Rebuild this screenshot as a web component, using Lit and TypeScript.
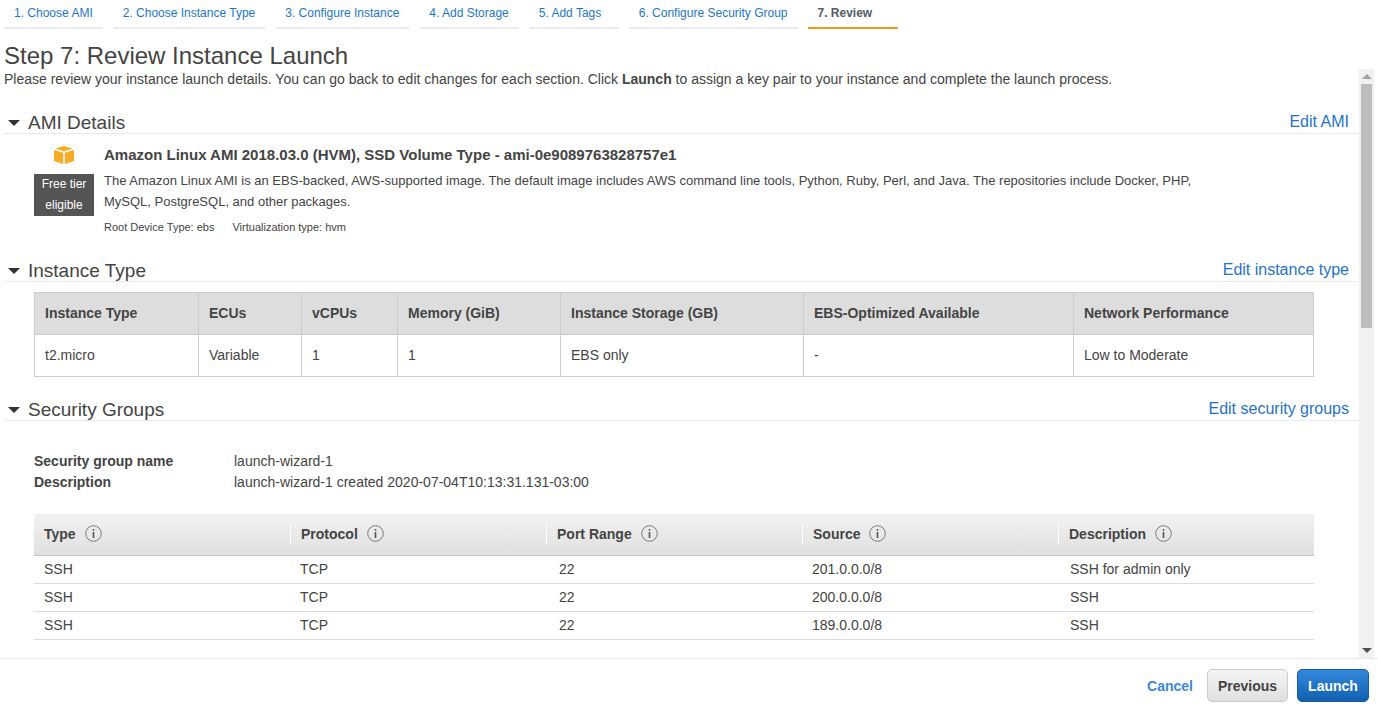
import {css, html, LitElement} from "lit";
import {customElement} from "lit/decorators.js";

const steps = [
    "1. Choose AMI",
    "2. Choose Instance Type",
    "3. Configure Instance",
    "4. Add Storage",
    "5. Add Tags",
    "6. Configure Security Group",
    "7. Review",
];

const instanceCols = ["Instance Type", "ECUs", "vCPUs", "Memory (GiB)", "Instance Storage (GB)", "EBS-Optimized Available", "Network Performance"];
const instanceRow = ["t2.micro", "Variable", "1", "1", "EBS only", "-", "Low to Moderate"];

const ruleCols = ["Type", "Protocol", "Port Range", "Source", "Description"];
const rules = [
    ["SSH", "TCP", "22", "201.0.0.0/8", "SSH for admin only"],
    ["SSH", "TCP", "22", "200.0.0.0/8", "SSH"],
    ["SSH", "TCP", "22", "189.0.0.0/8", "SSH"],
];

@customElement("app-root")
export class AppRoot extends LitElement {
    static styles = css`
        :host {
            display: flex;
            flex-direction: column;
            height: 722px;
            overflow: hidden;
            font-family: "Liberation Sans", Arial, sans-serif;
            font-size: 14px;
            color: #444;
            background: #fff;
        }

        .tabs {
            display: flex;
            gap: 10px;
            padding: 0 0 0 4px;
            height: 29px;
            box-sizing: border-box;
        }
        .tab {
            min-width: 70px;
            padding: 6px 10px 0;
            font-size: 12px;
            line-height: 14px;
            color: #1d77c9;
            border-bottom: 2px solid #eaeded;
            white-space: nowrap;
        }
        .tab.active {
            color: #545b64;
            font-weight: bold;
            border-bottom-color: #f7981d;
        }

        .title {
            margin: 0;
            padding: 13px 0 0 4px;
            font-size: 24px;
            font-weight: normal;
            line-height: 27px;
            height: 27px;
        }

        .middle {
            display: flex;
            height: 589px;
            padding: 0 4px;
            border-bottom: 1px solid #e8e8e8;
        }
        .scroll {
            flex: 1;
            min-width: 0;
            overflow: hidden;
        }
        .intro {
            margin: 2px 0 0;
            line-height: 16px;
        }

        .scrollbar {
            flex: none;
            width: 15px;
            display: flex;
            flex-direction: column;
            align-items: center;
            background: #f1f1f1;
        }
        .arrow {
            flex: none;
            height: 15px;
            display: flex;
            align-items: center;
            justify-content: center;
        }
        .thumb {
            flex: none;
            width: 11px;
            height: 244px;
            background: #bdbdbd;
        }
        .spacer {
            flex: 1;
        }

        .section-head {
            display: flex;
            align-items: flex-end;
            justify-content: space-between;
            height: 24px;
            padding: 0 10px 0 4px;
            border-bottom: 1px solid #eaeaea;
        }
        .section-title {
            display: flex;
            align-items: center;
            margin-bottom: -1px;
            font-size: 19px;
            line-height: 22px;
            color: #444;
        }
        .caret {
            width: 0;
            height: 0;
            margin-right: 8px;
            border-left: 6px solid transparent;
            border-right: 6px solid transparent;
            border-top: 6px solid #333;
        }
        .edit {
            font-size: 16px;
            line-height: 22px;
            color: #1f73c9;
        }
        .head-ami { margin-top: 22px; }
        .head-type { margin-top: 23px; }
        .head-sg { margin-top: 19px; }

        .ami {
            display: flex;
            padding: 11px 0 0 30px;
        }
        .ami-badge {
            flex: none;
            width: 60px;
            display: flex;
            flex-direction: column;
            align-items: center;
        }
        .cube {
            display: block;
            margin-bottom: 9px;
        }
        .free {
            width: 60px;
            height: 42px;
            background: #555;
            color: #fff;
            font-size: 12px;
            line-height: 21px;
            text-align: center;
        }
        .ami-info {
            margin-left: 10px;
            width: 1100px;
        }
        .ami-name {
            font-size: 15px;
            font-weight: bold;
            line-height: 20px;
        }
        .ami-desc {
            margin-top: 5px;
            font-size: 13px;
            line-height: 21px;
        }
        .ami-meta {
            display: flex;
            gap: 18px;
            margin-top: 8px;
            font-size: 11px;
            line-height: 14px;
        }

        .type-table {
            display: grid;
            grid-template-columns: 164px 103px 96px 163px 243px 270px 240px;
            width: 1280px;
            margin: 10px 0 0 30px;
            box-sizing: border-box;
            border-top: 1px solid #ccc;
            border-left: 1px solid #ccc;
        }
        .type-cell {
            height: 42px;
            box-sizing: border-box;
            display: flex;
            align-items: center;
            padding: 0 0 2px 10px;
            border-right: 1px solid #ccc;
            border-bottom: 1px solid #ccc;
        }
        .type-cell.th {
            background: #ddd;
            font-weight: bold;
        }

        .sg-info {
            display: grid;
            grid-template-columns: 200px 1fr;
            row-gap: 5px;
            margin: 32px 0 0 30px;
            line-height: 16px;
        }
        .sg-info b {
            font-weight: bold;
        }

        .rules {
            width: 1280px;
            margin: 24px 0 0 30px;
        }
        .rules-head {
            display: grid;
            grid-template-columns: repeat(5, 256px);
            height: 42px;
            box-sizing: border-box;
            align-items: center;
            background: linear-gradient(#f2f2f2, #e0e0e0);
            border-bottom: 1px solid #c4c4c4;
            padding-bottom: 2px;
        }
        .rules-th {
            display: flex;
            align-items: center;
            gap: 9px;
            height: 20px;
            padding-left: 10px;
            font-weight: bold;
            border-left: 1px solid #fff;
        }
        .rules-th:first-child {
            border-left: none;
        }
        .info {
            display: block;
            flex: none;
        }
        .rules-row {
            display: grid;
            grid-template-columns: 256px 259px 253px 258px 1fr;
            height: 28px;
            box-sizing: border-box;
            align-items: center;
            border-bottom: 1px solid #ddd;
            padding-bottom: 2px;
        }
        .rules-td {
            padding-left: 10px;
        }

        .footer {
            display: flex;
            align-items: center;
            justify-content: flex-end;
            gap: 9px;
            padding: 10px 9px 0 0;
        }
        .cancel {
            margin-right: 5px;
            color: #3b88d9;
            font-weight: bold;
        }
        .btn {
            height: 33px;
            box-sizing: border-box;
            display: flex;
            align-items: center;
            justify-content: center;
            border-radius: 5px;
            font-weight: bold;
        }
        .btn.previous {
            width: 81px;
            color: #444;
            background: linear-gradient(#f4f4f4, #e0e0e0);
            border: 1px solid #ccc;
        }
        .btn.launch {
            width: 72px;
            color: #fff;
            background: linear-gradient(#3388dd, #1260b0);
            border: 1px solid #155ea8;
        }
    `;

    private renderInfo() {
        return html`<svg class="info" width="17" height="17" viewBox="0 0 17 17">
            <circle cx="8.5" cy="8.5" r="7.8" fill="none" stroke="#777" stroke-width="1"></circle>
            <rect x="7.7" y="7" width="1.6" height="6" fill="#555"></rect>
            <rect x="7.7" y="4" width="1.6" height="1.7" fill="#555"></rect>
        </svg>`;
    }

    private renderHead(title: string, edit: string, cls: string) {
        return html`
            <div class="section-head ${cls}">
                <div class="section-title"><span class="caret"></span>${title}</div>
                <div class="edit">${edit}</div>
            </div>
        `;
    }

    protected render() {
        return html`
            <nav class="tabs">
                ${steps.map((s, i) => html`<div class="tab ${i === steps.length - 1 ? "active" : ""}">${s}</div>`)}
            </nav>
            <h1 class="title">Step 7: Review Instance Launch</h1>
            <div class="middle">
                <div class="scroll">
                    <p class="intro">Please review your instance launch details. You can go back to edit changes for each section. Click <b>Launch</b> to assign a key pair to your instance and complete the launch process.</p>

                    ${this.renderHead("AMI Details", "Edit AMI", "head-ami")}
                    <div class="ami">
                        <div class="ami-badge">
                            <svg class="cube" width="20" height="20" viewBox="0 0 20 20">
                                <path d="M10 1 L18.5 3.6 L10 6.4 L1.5 3.6 Z" fill="#fbaa24"></path>
                                <path d="M0 5 L9.2 7.8 V19 L0 16 Z" fill="#fbaa24"></path>
                                <path d="M20 5 L10.8 7.8 V19 L20 16 Z" fill="#fbaa24"></path>
                            </svg>
                            <div class="free">Free tier<br>eligible</div>
                        </div>
                        <div class="ami-info">
                            <div class="ami-name">Amazon Linux AMI 2018.03.0 (HVM), SSD Volume Type - ami-0e9089763828757e1</div>
                            <div class="ami-desc">The Amazon Linux AMI is an EBS-backed, AWS-supported image. The default image includes AWS command line tools, Python, Ruby, Perl, and Java. The repositories include Docker, PHP, MySQL, PostgreSQL, and other packages.</div>
                            <div class="ami-meta"><span>Root Device Type: ebs</span><span>Virtualization type: hvm</span></div>
                        </div>
                    </div>

                    ${this.renderHead("Instance Type", "Edit instance type", "head-type")}
                    <div class="type-table">
                        ${instanceCols.map((c) => html`<div class="type-cell th">${c}</div>`)}
                        ${instanceRow.map((c) => html`<div class="type-cell">${c}</div>`)}
                    </div>

                    ${this.renderHead("Security Groups", "Edit security groups", "head-sg")}
                    <div class="sg-info">
                        <b>Security group name</b><span>launch-wizard-1</span>
                        <b>Description</b><span>launch-wizard-1 created 2020-07-04T10:13:31.131-03:00</span>
                    </div>

                    <div class="rules">
                        <div class="rules-head">
                            ${ruleCols.map((c) => html`<div class="rules-th">${c}${this.renderInfo()}</div>`)}
                        </div>
                        ${rules.map((r) => html`
                            <div class="rules-row">
                                ${r.map((c) => html`<div class="rules-td">${c}</div>`)}
                            </div>
                        `)}
                    </div>
                </div>
                <div class="scrollbar">
                    <div class="arrow"><svg width="10" height="5" viewBox="0 0 10 5"><path d="M5 0 L10 5 H0 Z" fill="#a3a3a3"></path></svg></div>
                    <div class="thumb"></div>
                    <div class="spacer"></div>
                    <div class="arrow"><svg width="10" height="5" viewBox="0 0 10 5"><path d="M0 0 H10 L5 5 Z" fill="#505050"></path></svg></div>
                </div>
            </div>
            <div class="footer">
                <span class="cancel">Cancel</span>
                <div class="btn previous">Previous</div>
                <div class="btn launch">Launch</div>
            </div>
        `;
    }
}
